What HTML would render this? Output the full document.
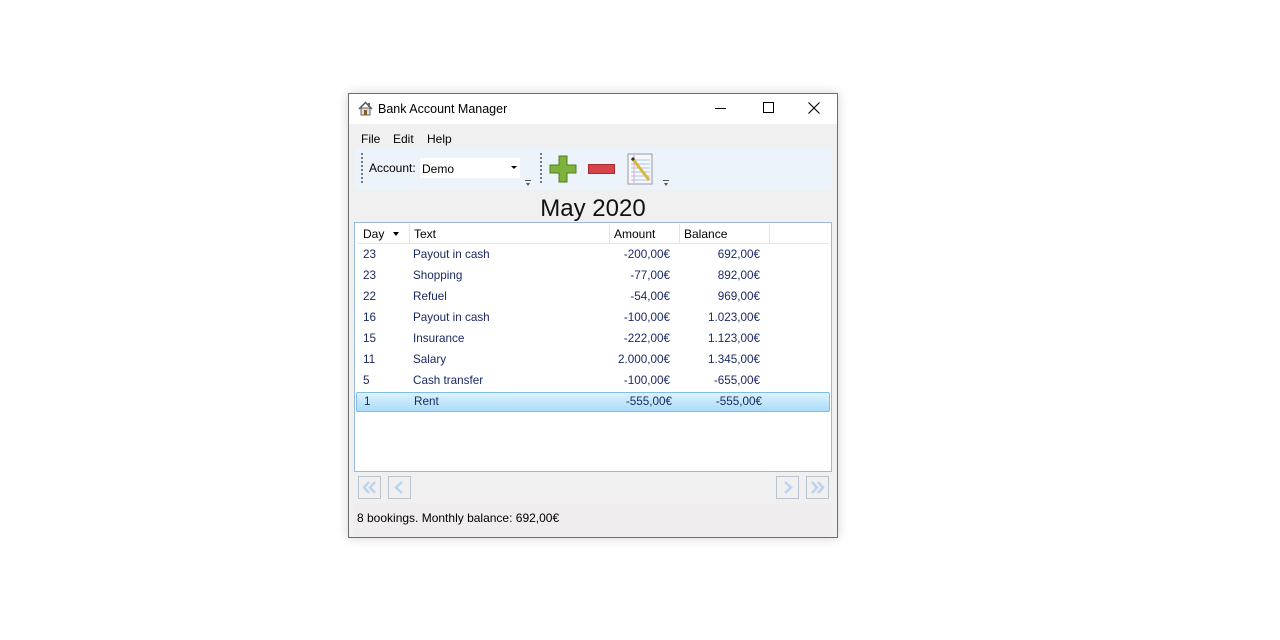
<!DOCTYPE html>
<html><head><meta charset="utf-8"><style>
*{margin:0;padding:0;box-sizing:border-box}
body{width:1280px;height:640px;background:#fff;position:relative;font-family:"Liberation Sans",sans-serif;font-size:12px;color:#000;overflow:hidden}
.a{position:absolute;white-space:nowrap}
#win{position:absolute;left:348px;top:93px;width:490px;height:445px;border:1px solid #6d6d6d;background:#f0f0f0;box-shadow:0 0 10px rgba(0,0,0,.18)}
.row{position:absolute;left:0;width:473px;height:21px;color:#1c2a63;font-size:11.7px}
.row span{position:absolute;top:3px}
.c1{left:8px}.c2{left:58px}.c3{right:158px}.c4{right:68px}
.nb{position:absolute;top:382px;width:23px;height:23px;border:1px solid #b9c3d0;background:#f0f0f0}
.nb svg{position:absolute;left:2px;top:2px}
</style></head><body>
<div id="win">
 <div class="a" style="left:0;top:0;width:488px;height:30px;background:#fff"></div>
 <svg class="a" style="left:9px;top:7px" width="15" height="15" viewBox="0 0 15 15"><path d="M1 8 L7.5 1.5 L14 8" fill="none" stroke="#555" stroke-width="1.5"/><rect x="3" y="7" width="9" height="7" fill="#ddd" stroke="#666"/><rect x="6" y="9" width="3" height="5" fill="#8a5a2a"/><rect x="10" y="2" width="2" height="4" fill="#666"/></svg>
 <div class="a" style="left:29px;top:8px;font-size:12.5px">Bank Account Manager</div>
 <div class="a" style="left:366px;top:14px;width:11px;height:1px;background:#000"></div>
 <div class="a" style="left:414px;top:8px;width:11px;height:11px;border:1px solid #000"></div>
 <svg class="a" style="left:459px;top:8px" width="12" height="12"><path d="M0.5 0.5L11.5 11.5M11.5 0.5L0.5 11.5" stroke="#000" stroke-width="1.1"/></svg>
 <div class="a" style="left:12px;top:38px">File</div>
 <div class="a" style="left:44px;top:38px">Edit</div>
 <div class="a" style="left:78px;top:38px">Help</div>
 <div class="a" style="left:6px;top:54px;width:477px;height:42px;background:#edf3fb"></div>
 <div class="a" style="left:12px;top:59px;height:30px;border-left:2px dotted #777"></div>
 <div class="a" style="left:20px;top:67px">Account:</div>
 <div class="a" style="left:71px;top:64px;width:100px;height:20px;background:#fff"></div>
 <div class="a" style="left:73px;top:68px">Demo</div>
 <div class="a" style="left:162px;top:72px;border-left:3px solid transparent;border-right:3px solid transparent;border-top:3px solid #000"></div>
 <div class="a" style="left:176px;top:86px;width:6px;border-top:1px solid #555;height:3px"></div>
 <div class="a" style="left:177px;top:89px;border-left:2.5px solid transparent;border-right:2.5px solid transparent;border-top:3px solid #555"></div>
 <div class="a" style="left:191px;top:59px;height:30px;border-left:2px dotted #777"></div>
 <svg class="a" style="left:200px;top:61px" width="30" height="28" viewBox="0 0 30 28"><path d="M10 1H18V10H27V18H18V27H10V18H1V10H10Z" fill="#7db23c" stroke="#4f7f1c"/></svg>
 <div class="a" style="left:239px;top:70px;width:27px;height:10px;background:#d6444a;border:1px solid #a52b30"></div>
 <svg class="a" style="left:278px;top:59px" width="27" height="32" viewBox="0 0 27 32"><rect x="1" y="1" width="24" height="30" fill="#f6f7fb" stroke="#999"/><path d="M4 7H23M4 11H23M4 15H23M4 19H23M4 23H23M4 27H23" stroke="#aac4ea"/><path d="M7 2V30" stroke="#e6a0d0"/><path d="M5 5L22 27" stroke="#d8b93a" stroke-width="3"/><path d="M5 5L7 7" stroke="#333" stroke-width="3"/></svg>
 <div class="a" style="left:314px;top:86px;width:6px;border-top:1px solid #555;height:3px"></div>
 <div class="a" style="left:315px;top:89px;border-left:2.5px solid transparent;border-right:2.5px solid transparent;border-top:3px solid #555"></div>
 <div class="a" style="left:0;width:488px;top:101px;text-align:center;font-size:24px;color:#111">May 2020</div>
 <div class="a" style="left:5px;top:128px;width:478px;height:250px;background:#fff;border:1px solid #99b9da">
  <div class="a" style="left:2px;top:1px;width:472px;height:20px;border-bottom:1px solid #e5e5e5">
   <span class="a" style="left:6px;top:3px">Day</span>
   <div class="a" style="left:36px;top:8px;border-left:3.5px solid transparent;border-right:3.5px solid transparent;border-top:4px solid #000"></div>
   <div class="a" style="left:52px;top:0;height:20px;border-left:1px solid #e5e5e5"></div>
   <span class="a" style="left:57px;top:3px">Text</span>
   <div class="a" style="left:252px;top:0;height:20px;border-left:1px solid #e5e5e5"></div>
   <span class="a" style="left:257px;top:3px">Amount</span>
   <div class="a" style="left:322px;top:0;height:20px;border-left:1px solid #e5e5e5"></div>
   <span class="a" style="left:327px;top:3px">Balance</span>
   <div class="a" style="left:412px;top:0;height:20px;border-left:1px solid #e5e5e5"></div>
  </div>
  <div class="row" style="top:22px"><span class="c1">23</span><span class="c2">Payout in cash</span><span class="c3">-200,00€</span><span class="c4">692,00€</span></div>
  <div class="row" style="top:43px"><span class="c1">23</span><span class="c2">Shopping</span><span class="c3">-77,00€</span><span class="c4">892,00€</span></div>
  <div class="row" style="top:64px"><span class="c1">22</span><span class="c2">Refuel</span><span class="c3">-54,00€</span><span class="c4">969,00€</span></div>
  <div class="row" style="top:85px"><span class="c1">16</span><span class="c2">Payout in cash</span><span class="c3">-100,00€</span><span class="c4">1.023,00€</span></div>
  <div class="row" style="top:106px"><span class="c1">15</span><span class="c2">Insurance</span><span class="c3">-222,00€</span><span class="c4">1.123,00€</span></div>
  <div class="row" style="top:127px"><span class="c1">11</span><span class="c2">Salary</span><span class="c3">2.000,00€</span><span class="c4">1.345,00€</span></div>
  <div class="row" style="top:148px"><span class="c1">5</span><span class="c2">Cash transfer</span><span class="c3">-100,00€</span><span class="c4">-655,00€</span></div>
  <div class="row" style="top:169px;left:1px;width:474px;height:20px;background:linear-gradient(#dcf2fd,#a9dcf8);border:1px solid #7fbde6;border-radius:2px"><span class="c1" style="left:7px;top:2px">1</span><span class="c2" style="left:57px;top:2px">Rent</span><span class="c3" style="right:157px;top:2px">-555,00€</span><span class="c4" style="right:67px;top:2px">-555,00€</span></div>
 </div>
 <div class="nb" style="left:9px"><svg width="17" height="17" viewBox="0 0 17 17"><path d="M8 3L3 8.5L8 14M14 3L9 8.5L14 14" fill="none" stroke="#bcd3f0" stroke-width="2.5"/></svg></div>
 <div class="nb" style="left:39px"><svg width="17" height="17" viewBox="0 0 17 17"><path d="M11 3L5 8.5L11 14" fill="none" stroke="#bcd3f0" stroke-width="2.5"/></svg></div>
 <div class="nb" style="left:427px"><svg width="17" height="17" viewBox="0 0 17 17"><path d="M6 3L12 8.5L6 14" fill="none" stroke="#bcd3f0" stroke-width="2.5"/></svg></div>
 <div class="nb" style="left:457px"><svg width="17" height="17" viewBox="0 0 17 17"><path d="M3 3L8 8.5L3 14M9 3L14 8.5L9 14" fill="none" stroke="#bcd3f0" stroke-width="2.5"/></svg></div>
 <div class="a" style="left:5px;top:409px;width:479px;height:32px;background:#efeded"></div>
 <div class="a" style="left:8px;top:417px">8 bookings. Monthly balance: 692,00€</div>
</div>
</body></html>
